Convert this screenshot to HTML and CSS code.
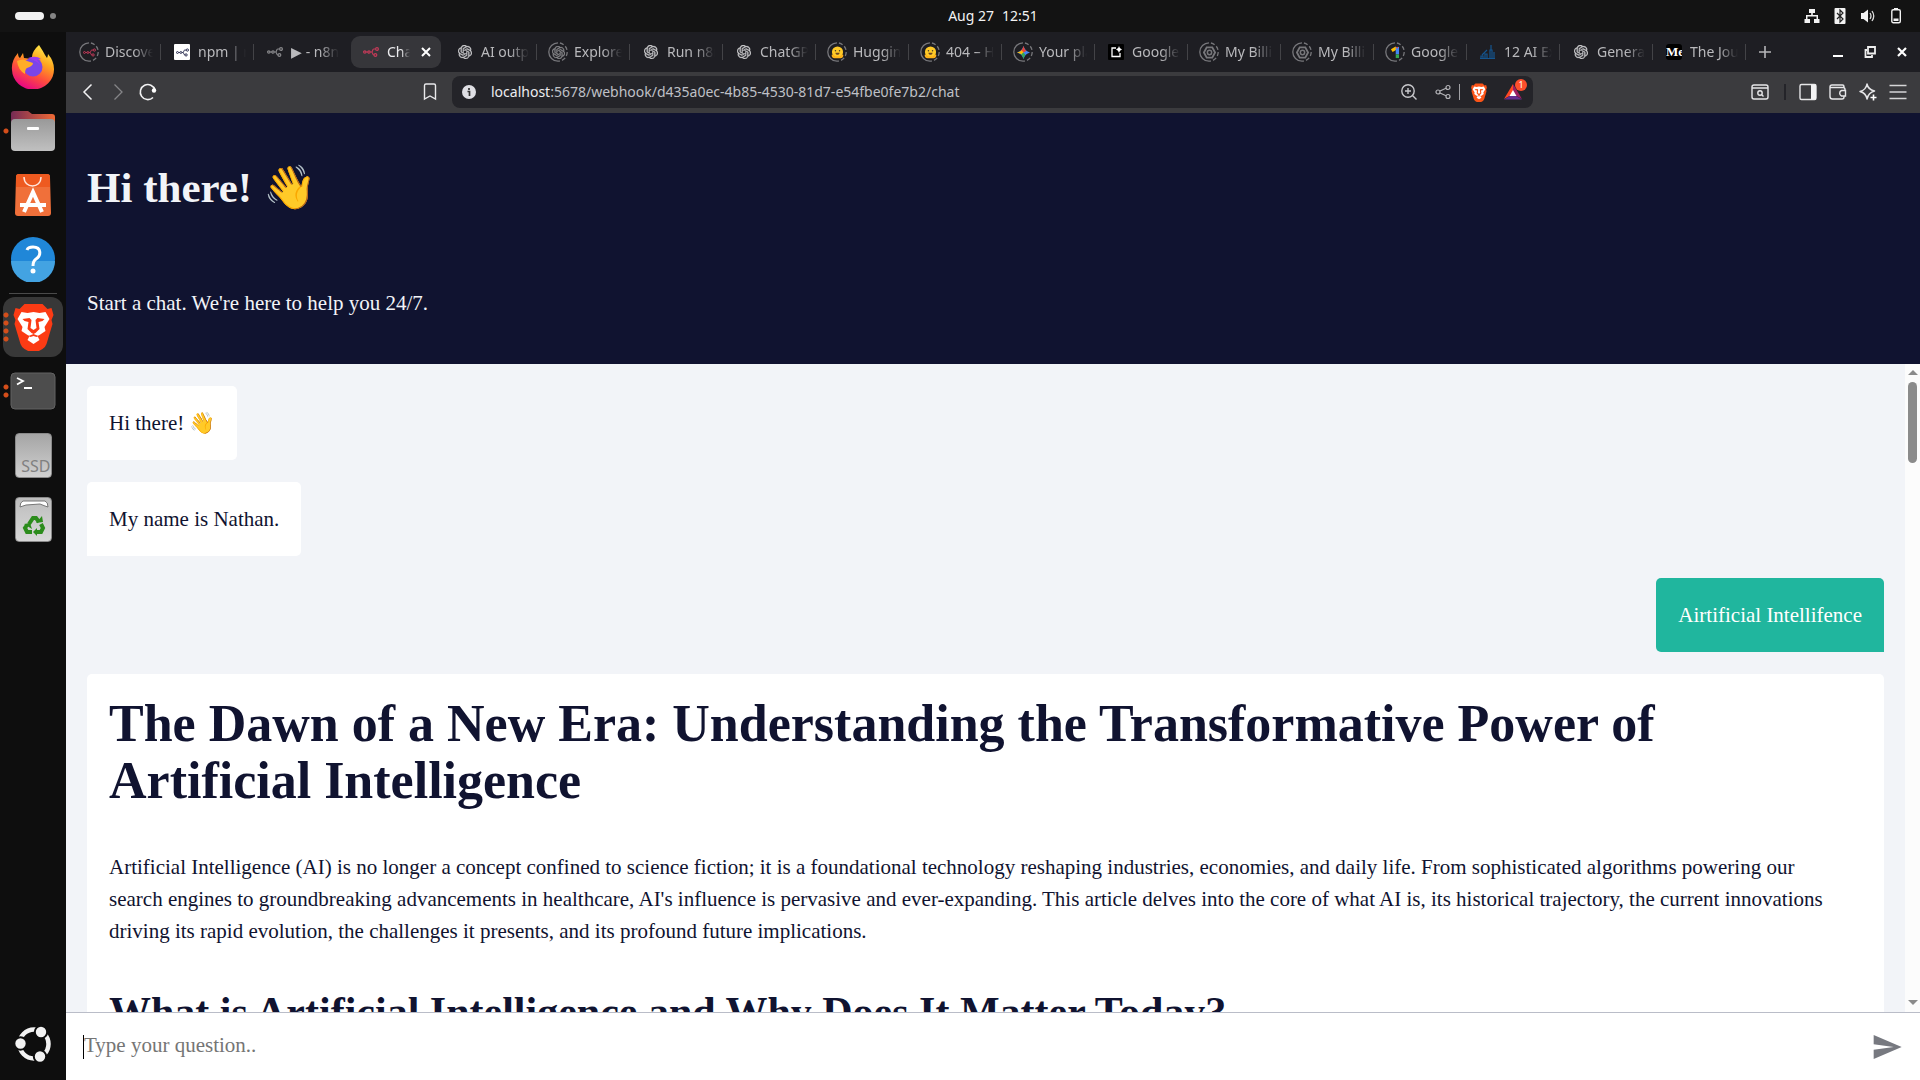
FILE: index.html
```html
<!DOCTYPE html>
<html lang="en">
<head>
<meta charset="utf-8">
<title>Chat</title>
<link rel="stylesheet" href="styles.css">
</head>
<body>
<svg class="defs" width="0" height="0" aria-hidden="true">
  <defs>
    <symbol id="n8n" viewBox="0 0 16 16">
      <g fill="none" stroke="currentColor" stroke-width="1.2">
        <circle cx="1.8" cy="8" r="1.2"/><circle cx="6" cy="8" r="1.2"/>
        <circle cx="14" cy="5" r="1.4"/><circle cx="12.4" cy="11" r="1.4"/>
        <path d="M3 8h1.800M7.200 8h1.300c1.500 0 .6-3 2.300-3h1.800M8.500 8c1.500 0 .6 3 2.500 3"/>
      </g>
    </symbol>
    <symbol id="openai" viewBox="0 0 24 24">
      <path fill="currentColor" stroke="currentColor" stroke-width=".6" d="M22.2819 9.8211a5.9847 5.9847 0 0 0-.5157-4.9108 6.0462 6.0462 0 0 0-6.5098-2.9A6.0651 6.0651 0 0 0 4.9807 4.1818a5.9847 5.9847 0 0 0-3.9977 2.9 6.0462 6.0462 0 0 0 .7427 7.0966 5.98 5.98 0 0 0 .511 4.9107 6.051 6.051 0 0 0 6.5146 2.9001A5.9847 5.9847 0 0 0 13.2599 24a6.0557 6.0557 0 0 0 5.7718-4.2058 5.9894 5.9894 0 0 0 3.9977-2.9001 6.0557 6.0557 0 0 0-.7475-7.0729zm-9.022 12.6081a4.4755 4.4755 0 0 1-2.8764-1.0408l.1419-.0804 4.7783-2.7582a.7948.7948 0 0 0 .3927-.6813v-6.7369l2.02 1.1686a.071.071 0 0 1 .038.052v5.5826a4.504 4.504 0 0 1-4.4945 4.4944zm-9.6607-4.1254a4.4708 4.4708 0 0 1-.5346-3.0137l.142.0852 4.783 2.7582a.7712.7712 0 0 0 .7806 0l5.8428-3.3685v2.3324a.0804.0804 0 0 1-.0332.0615L9.74 19.9502a4.4992 4.4992 0 0 1-6.1408-1.6464zM2.3408 7.8956a4.485 4.485 0 0 1 2.3655-1.9728V11.6a.7664.7664 0 0 0 .3879.6765l5.8144 3.3543-2.0201 1.1685a.0757.0757 0 0 1-.071 0l-4.8303-2.7865A4.504 4.504 0 0 1 2.3408 7.872zm16.5963 3.8558L13.1038 8.364 15.1192 7.2a.0757.0757 0 0 1 .071 0l4.8303 2.7913a4.4944 4.4944 0 0 1-.6765 8.1042v-5.6772a.79.79 0 0 0-.407-.667zm2.0107-3.0231l-.142-.0852-4.7735-2.7818a.7759.7759 0 0 0-.7854 0L9.409 9.2297V6.8974a.0662.0662 0 0 1 .0284-.0615l4.8303-2.7866a4.4992 4.4992 0 0 1 6.6802 4.66zM8.3065 12.863l-2.02-1.1638a.0804.0804 0 0 1-.038-.0567V6.0742a4.4992 4.4992 0 0 1 7.3757-3.4537l-.142.0805L8.704 5.459a.7948.7948 0 0 0-.3927.6813zm1.0976-2.3654l2.602-1.4998 2.6069 1.4998v2.9994l-2.5974 1.4997-2.6067-1.4997Z"/>
    </symbol>
    <symbol id="ring" viewBox="0 0 20 20">
      <path d="M10 .8a9.200 9.200 0 0 0 0 18.400" fill="none" stroke="#77777b" stroke-width="1.3"/>
      <path d="M10 .8a9.200 9.200 0 0 1 0 18.400" fill="none" stroke="#77777b" stroke-width="1.3" stroke-dasharray="4 2.200" stroke-dashoffset="-2"/>
    </symbol>
    <symbol id="hugging" viewBox="0 0 14 14">
      <circle cx="7" cy="6.500" r="6" fill="#ffca28"/>
      <path d="M.8 9.500c1.400-1 2.700.3 3 1.500h6.400c.3-1.200 1.600-2.500 3-1.500.6 2-1.200 3.700-3 3.700H3.800C2 13.200.2 11.500.8 9.500z" fill="#ffb31a"/>
      <circle cx="4.800" cy="5" r=".8" fill="#453c27"/><circle cx="9.200" cy="5" r=".8" fill="#453c27"/>
      <path d="M4.800 7.200h4.400c0 3-4.400 3-4.400 0z" fill="#6b4622"/>
    </symbol>
    <symbol id="billing" viewBox="0 0 14 14">
      <g fill="none" stroke="#77777b"><path stroke-width="2" d="M4 1.500h6L13 7l-3 5.500H4L1 7z"/><circle cx="7" cy="7" r="2.300" stroke-width="1.600"/></g>
    </symbol>
    <symbol id="lion" viewBox="0 0 40 48">
      <path fill="currentColor" d="M11 1h18l5 5 4-1 2 7-2 5 1 4-6 20q-1 3-4 5l-9 5-9-5q-3-2-4-5L1 21l1-4-2-5 2-7 4 1z"/>
      <path fill="#fff" d="M8 9l6 1 6-1 6 1 6-1 4 7-5 8 1 4-6 4-2 1 2 4-6 4-6-4 2-4-2-1-6-4 1-4-5-8z"/>
      <path fill="currentColor" d="M9 16l7-1 2 2-1 8 3 2 3-2-1-8 2-2 7 1-2 2-4 1 1 7-4 4-2 1-2-1-4-4 1-7-4-1zM15 33l5-2 5 2-2 1-3-1-3 1z"/>
    </symbol>
  </defs>
</svg>

<div class="desktop">
  <header class="topbar">
    <div class="workspaces"><i class="pill"></i><i class="dot"></i></div>
    <time class="clock"><span>Aug 27</span><span>12:51</span></time>
    <div class="status">
      <svg width="16" height="16" viewBox="0 0 16 16"><path fill="#f2f2f2" d="M5 1h6v4H8.800v2H14v4h1.500v4H10v-4h2.500V8.500h-9V11H6v4H.5v-4H2V7h5.200V5H5z"/></svg>
      <svg width="16" height="16" viewBox="0 0 16 16"><rect x="2.500" width="11" height="16" rx="1" fill="#f2f2f2"/><path d="M5 5l6 6-3 3V2l3 3-6 6" fill="none" stroke="#222" stroke-width="1.200"/></svg>
      <svg width="16" height="16" viewBox="0 0 16 16"><path fill="#f2f2f2" d="M1 5h2.500L8 1.500v13L3.500 11H1z"/><path d="M10 5q2 3 0 6M12 3q3.500 5 0 10" fill="none" stroke="#ddd" stroke-width="1.300"/></svg>
      <svg width="16" height="16" viewBox="0 0 16 16"><rect x="3.800" y="1.800" width="8.500" height="13" rx="1.500" fill="none" stroke="#f2f2f2" stroke-width="1.400"/><path fill="#f2f2f2" d="M6 0h4v2H6zM5.500 10.500h5V13h-5z"/></svg>
    </div>
  </header>

  <nav class="dock" aria-label="Dock">
    <a href="#" class="app" aria-label="Firefox"><svg width="44" height="44" viewBox="0 0 44 44">
      <defs><linearGradient id="ff" x1=".8" y1="0" x2=".3" y2="1"><stop offset="0" stop-color="#fff44f"/><stop offset=".35" stop-color="#ffa51e"/><stop offset=".65" stop-color="#ff4f3c"/><stop offset="1" stop-color="#e5008a"/></linearGradient></defs>
      <path fill="url(#ff)" d="M28 0q4 6 6 10l2 3q1-2 1-4 6 7 6 15a21 20 0 0 1-42 1Q0 16 7 8q0 4 2 5l3-5 1 5 8 1q-1-7 7-14z"/>
      <circle cx="22" cy="22" r="9.500" fill="#7b45e8"/>
      <path fill="#ffac28" d="M6 16q6-3 10 0l6 2q0 3-6 5-2 1-2 6-7-4-8-13z"/>
      <path fill="#9c3cf0" d="M17 13q8-3 13 1l-4 1 5 7q-4-6-14-9z"/>
    </svg></a>
    <a href="#" class="app" aria-label="Files"><i class="runs one"></i><svg width="46" height="42" viewBox="0 0 46 42">
      <defs><linearGradient id="fo"><stop offset="0" stop-color="#752b55"/><stop offset="1" stop-color="#f06a35"/></linearGradient><linearGradient id="fg" x2="0" y2="1"><stop offset="0" stop-color="#999"/><stop offset="1" stop-color="#c0c0c0"/></linearGradient></defs>
      <path fill="url(#fo)" d="M1 4q0-3 3-3h14l4 3h20q3 0 3 3v12H1z"/><rect x="1" y="9" width="44" height="32" rx="4" fill="url(#fg)"/><rect x="17" y="17" width="12" height="3" rx="1" fill="#fff"/></svg></a>
    <a href="#" class="app" aria-label="App Center"><svg width="38" height="42" viewBox="0 0 38 42">
      <path fill="#f0703a" d="M5 0h28q3 0 3 3l1 36q0 3-3 3H4q-3 0-3-3L2 3q0-3 3-3z"/><path fill="#ee5a20" d="M5 0h28q3 0 3 3v10H2V3q0-3 3-3z"/>
      <path d="M10 3c0 12 17 12 17 0" fill="none" stroke="#ffe6dc" stroke-width="1.500"/><path d="M10 38l9-20 9 20M6 31h26" fill="none" stroke="#fff" stroke-width="4"/></svg></a>
    <a href="#" class="app" aria-label="Help"><svg width="46" height="46" viewBox="0 0 46 46"><circle cx="23" cy="23" r="22" fill="#2087d8"/><path fill="#43a3e2" d="M1 25h44a22 22 0 0 1-44 0z"/><path d="M17 14q1-3 6-3c9 0 8 9 3 12q-3 2-3 7" fill="none" stroke="#fff" stroke-width="3"/><circle cx="23" cy="35" r="2.500" fill="#fff"/></svg></a>
    <hr class="dock-line">
    <a href="#" class="app" aria-label="Brave"><span class="tile"><svg width="41" height="48" class="brave"><use href="#lion"/></svg></span><i class="runs four"></i></a>
    <a href="#" class="app" aria-label="Terminal"><i class="runs two"></i><svg width="46" height="38" viewBox="0 0 46 38"><rect x="1" y="1" width="44" height="36" rx="4" fill="#4d4d4d" stroke="#626262"/><path d="M7 6l6 3-6 3.500M14 16h8" fill="none" stroke="#fff" stroke-width="1.800"/></svg></a>
    <a href="#" class="app" aria-label="SSD drive"><span class="drive">SSD</span></a>
    <a href="#" class="app" aria-label="Trash"><span class="trash"><svg width="36" height="44" viewBox="0 0 36 44"><path fill="#fff" stroke="#777" d="M4 9q0-5 3-6h22q3 1 3 6l-3-1-5-2-14 1z"/>
      <g fill="none" stroke="#2c8c1c" stroke-width="4"><path d="M13 26l4-6h3l3 4"/><path d="M25 26l2 4-2 4h-5"/><path d="M16 34h-5l-2-4 2-3"/></g>
      <path fill="#2c8c1c" d="M20 25l7-1-1-6zM21 30v8l-4-4zM8 26l6-1 2 6z"/></svg></span></a>
    <a href="#" class="app launcher" aria-label="Show applications"><svg width="38" height="38" viewBox="0 0 38 38"><circle cx="20" cy="19" r="14.500" fill="none" stroke="#f2f2f2" stroke-width="4.500"/><g fill="#f2f2f2" stroke="#0e0e0e" stroke-width="2"><circle cx="6.500" cy="18.500" r="6.200"/><circle cx="27" cy="7" r="6.200"/><circle cx="26" cy="31.500" r="6.200"/></g></svg></a>
  </nav>

  <div class="browser">
    <div class="tabstrip">
      <div class="tabs">
        <a href="#" class="tab"><span class="fav"><svg class="ring"><use href="#ring"/></svg><svg class="small red"><use href="#n8n"/></svg></span><span class="label">Discover</span></a>
        <a href="#" class="tab"><span class="fav white"><svg class="small ink"><use href="#n8n"/></svg></span><span class="label">npm | n8n</span></a>
        <a href="#" class="tab plain"><span class="fav"><svg class="mid gray"><use href="#n8n"/></svg></span><span class="label">▶ - n8n</span></a>
        <div class="tab active"><span class="fav"><svg class="mid red"><use href="#n8n"/></svg></span><span class="label">Chat</span><button class="close" aria-label="Close tab"><svg width="10" height="10" viewBox="0 0 10 10"><path d="M1 1l8 8M9 1L1 9" stroke="#fff" stroke-width="2"/></svg></button></div>
        <a href="#" class="tab"><span class="fav"><svg class="mark"><use href="#openai"/></svg></span><span class="label">AI output</span></a>
        <a href="#" class="tab"><span class="fav"><svg class="ring"><use href="#ring"/></svg><svg class="small gray"><use href="#openai"/></svg></span><span class="label">Explore</span></a>
        <a href="#" class="tab"><span class="fav"><svg class="mark"><use href="#openai"/></svg></span><span class="label">Run n8n</span></a>
        <a href="#" class="tab"><span class="fav"><svg class="mark"><use href="#openai"/></svg></span><span class="label">ChatGPT</span></a>
        <a href="#" class="tab"><span class="fav"><svg class="ring"><use href="#ring"/></svg><svg class="small"><use href="#hugging"/></svg></span><span class="label">Hugging</span></a>
        <a href="#" class="tab"><span class="fav"><svg class="ring"><use href="#ring"/></svg><svg class="small"><use href="#hugging"/></svg></span><span class="label">404 – Hu</span></a>
        <a href="#" class="tab"><span class="fav"><svg class="ring"><use href="#ring"/></svg><svg class="small" viewBox="0 0 14 14"><path fill="#4285f4" d="M7 0q1.500 5.500 7 7-5.500 1.500-7 7-1.500-5.500-7-7 5.500-1.500 7-7z"/><path fill="#ea4335" d="M7 0q1 4 3 5.500L7 7 4 5.500Q6 4 7 0z"/><path fill="#fbbc04" d="M0 7q4-1 5-2.500L7 7l-2 2.500Q4 8 0 7z"/><path fill="#34a853" d="M7 14Q6 10 4.500 9L7 7l2 2.500Q7.500 11 7 14z"/></svg></span><span class="label">Your plan</span></a>
        <a href="#" class="tab"><span class="fav black"><svg class="mid" viewBox="0 0 16 16"><path d="M8 4H4v8.500h8V9" fill="none" stroke="#fff" stroke-width="1.300"/><path fill="#fff" d="M11 2q.5 3 3 3.500Q11.500 6 11 9q-.5-3-3-3.500Q10.500 5 11 2z"/></svg></span><span class="label">Google</span></a>
        <a href="#" class="tab"><span class="fav"><svg class="ring"><use href="#ring"/></svg><svg class="small"><use href="#billing"/></svg></span><span class="label">My Billing</span></a>
        <a href="#" class="tab"><span class="fav"><svg class="ring"><use href="#ring"/></svg><svg class="small"><use href="#billing"/></svg></span><span class="label">My Billing</span></a>
        <a href="#" class="tab"><span class="fav"><svg class="ring"><use href="#ring"/></svg><svg class="small" viewBox="0 0 14 14"><path d="M3 5l5-3" stroke="#fbbc04" stroke-width="3.500"/><path d="M9 1v8" stroke="#4285f4" stroke-width="3.500"/><path d="M9 9v4" stroke="#34a853" stroke-width="3.500"/><path d="M7.300 1H10l-1 2z" fill="#ea4335"/></svg></span><span class="label">Google</span></a>
        <a href="#" class="tab"><span class="fav"><svg class="mid" viewBox="0 0 16 16"><path d="M1 14v-2h2v2M5 14v-4h2v4M10 14V6h2v8M11 6V1M14 14V8M0 14.500h15M2 11l5-5" fill="none" stroke="#14558f" stroke-width="1.200"/></svg></span><span class="label">12 AI Ex</span></a>
        <a href="#" class="tab"><span class="fav"><svg class="mark"><use href="#openai"/></svg></span><span class="label">General</span></a>
        <a href="#" class="tab"><span class="fav black medium">Me</span><span class="label">The Jour</span></a>
      </div>
      <div class="window-controls">
        <button class="add" aria-label="New tab"><svg width="12" height="12" viewBox="0 0 12 12"><path d="M6 0v12M0 6h12" stroke="#b5b5b8" stroke-width="1.600"/></svg></button>
        <div class="win">
          <button aria-label="Minimize"><svg width="12" height="12" viewBox="0 0 12 12"><path d="M1 10h10" stroke="#fff" stroke-width="2"/></svg></button>
          <button aria-label="Restore"><svg width="12" height="12" viewBox="0 0 12 12"><path d="M4 1h7v6.500H4zM3 4H1.500v7H8V9" fill="none" stroke="#eee" stroke-width="1.800"/></svg></button>
          <button aria-label="Close"><svg width="12" height="12" viewBox="0 0 12 12"><path d="M2 2l8 8M10 2l-8 8" stroke="#fff" stroke-width="2.200"/></svg></button>
        </div>
      </div>
    </div>

    <div class="toolbar">
      <div class="nav-buttons">
        <button aria-label="Back"><svg width="20" height="20" viewBox="0 0 20 20"><path d="M13.500 2.500L6 10l7.500 7.500" fill="none" stroke="#f2f2f3" stroke-width="1.500"/></svg></button>
        <button aria-label="Forward"><svg width="20" height="20" viewBox="0 0 20 20"><path d="M6.500 2.500L14 10l-7.500 7.500" fill="none" stroke="#858588" stroke-width="1.300"/></svg></button>
        <button aria-label="Reload"><svg width="20" height="20" viewBox="0 0 20 20"><path d="M15 15.500A7.500 7.500 0 1 1 17 8" fill="none" stroke="#f2f2f3" stroke-width="1.600"/><circle cx="16" cy="8.500" r="2.200" fill="#fff"/></svg></button>
      </div>
      <button class="bookmark" aria-label="Bookmark"><svg width="20" height="20" viewBox="0 0 20 20"><path d="M4.500 3.500q0-1.500 1.500-1.500h8q1.500 0 1.500 1.500V17L10 14l-5.500 3z" fill="none" stroke="#e8e8ea" stroke-width="1.400"/></svg></button>
      <div class="address">
        <svg width="14" height="14" viewBox="0 0 14 14"><circle cx="7" cy="7" r="7" fill="#dfdfe4"/><path d="M5.500 6.500H7.500V11M7 3v2" fill="none" stroke="#333" stroke-width="1.700"/></svg>
        <div class="url"><b>localhost</b>:5678/webhook/d435a0ec-4b85-4530-81d7-e54fbe0fe7b2/chat</div>
        <button aria-label="Zoom"><svg width="18" height="18" viewBox="0 0 18 18"><path d="M8 1.800a6 6 0 1 0 0 12.400A6 6 0 0 0 8 1.800zM12.500 12.500l4 4M8 5v6M5 8h6" fill="none" stroke="#c8c8cc" stroke-width="1.400"/></svg></button>
        <button class="share" aria-label="Share"><svg width="16" height="16" viewBox="0 0 16 16"><g fill="none" stroke="#b5b5b9" stroke-width="1.200"><circle cx="3" cy="8" r="2"/><circle cx="13" cy="3.500" r="2"/><circle cx="13" cy="12.500" r="2"/><path d="M5 7l6-2.700M5 9l6 2.700"/></g></svg></button>
        <i class="divider"></i>
        <button aria-label="Brave Shields"><svg width="16" height="19" class="shield"><use href="#lion"/></svg></button>
        <button class="rewards" aria-label="Rewards"><svg width="18" height="16" viewBox="0 0 18 16"><path fill="#ff4724" d="M9 0L0 15l9-5z"/><path fill="#9e1f63" d="M9 0l9 15-9-5z"/><path fill="#662d91" d="M0 15.500h18L9 10z"/><path fill="#fff" d="M9 6l3.500 6h-7z"/></svg><span class="badge">1</span></button>
      </div>
      <div class="tools">
        <button aria-label="Search tabs"><svg width="20" height="20" viewBox="0 0 20 20"><g fill="none" stroke="#e6e6e8" stroke-width="1.400"><rect x="2" y="3" width="16" height="14" rx="2"/><path d="M2 6h16M11.500 12.500l2 2"/><circle cx="10" cy="11" r="2.200"/></g></svg></button>
        <i class="divider dark"></i>
        <button aria-label="Sidebar"><svg width="20" height="20" viewBox="0 0 20 20"><rect x="2" y="2.500" width="16" height="15" rx="1.500" fill="none" stroke="#e6e6e8" stroke-width="1.400"/><path fill="#f2f2f3" d="M13 2.500h5v15h-5z"/></svg></button>
        <button aria-label="Wallet"><svg width="20" height="20" viewBox="0 0 20 20"><path d="M16 6V4.500Q16 3 14.500 3H4Q2 3 2 5v9.500Q2 17 4.500 17H14q2 0 2-2v-.500M2 5.500h13q2 0 2 2V8M17.500 8.500h-4a3 3 0 0 0 0 5.500h4z" fill="none" stroke="#e6e6e8" stroke-width="1.400"/></svg></button>
        <button aria-label="Leo AI"><svg width="20" height="20" viewBox="0 0 20 20"><path d="M9 2q1 5.500 7.500 7-6 1.500-7.500 8Q8 11 2 9.500 8 8 9 2z" fill="none" stroke="#e6e6e8" stroke-width="1.500" stroke-linejoin="round"/><path d="M15.500 12.500v6M12.500 15.500h6" stroke="#fff" stroke-width="1.600"/></svg></button>
        <button aria-label="Menu"><svg width="20" height="20" viewBox="0 0 20 20"><path d="M1.500 3.500h17M1.500 10h17M1.500 16.500h17" stroke="#d5d5d7" stroke-width="1.600"/></svg></button>
      </div>
    </div>

    <main class="chat">
      <header class="chat-header">
        <h1>Hi there! 👋</h1>
        <p>Start a chat. We're here to help you 24/7.</p>
      </header>
      <div class="chat-body">
        <div class="messages">
          <div class="message bot">Hi there! 👋</div>
          <div class="message bot">My name is Nathan.</div>
          <div class="message user">Airtificial Intellifence</div>
          <article class="message bot article">
            <h1>The Dawn of a New Era: Understanding the Transformative Power of Artificial Intelligence</h1>
            <p>Artificial Intelligence (AI) is no longer a concept confined to science fiction; it is a foundational technology reshaping industries, economies, and daily life. From sophisticated algorithms powering our search engines to groundbreaking advancements in healthcare, AI's influence is pervasive and ever-expanding. This article delves into the core of what AI is, its historical trajectory, the current innovations driving its rapid evolution, the challenges it presents, and its profound future implications.</p>
            <h2>What is Artificial Intelligence and Why Does It Matter Today?</h2>
          </article>
        </div>
        <div class="scrollbar"><i class="arrow up"></i><i class="thumb"></i><i class="arrow down"></i></div>
      </div>
      <form class="composer">
        <i class="caret"></i>
        <input type="text" placeholder="Type your question.." aria-label="Type your question">
        <button type="button" aria-label="Send"><svg width="32" height="32" viewBox="0 0 24 24"><path fill="#777980" d="M2.010 21L23 12 2.010 3 2 10l15 2-15 2z"/></svg></button>
      </form>
    </main>
  </div>
</div>
</body>
</html>
```
FILE: styles.css
```css
* { box-sizing: border-box; }

body {
  margin: 0;
  font-family: "Liberation Serif", "Times New Roman", serif;
  background: #0e0e0e;
}

button {
  display: flex;
  align-items: center;
  justify-content: center;
  padding: 0;
  border: 0;
  background: none;
}

a { color: inherit; text-decoration: none; }
svg { display: block; flex: none; }
.defs { position: absolute; }

.desktop {
  display: grid;
  grid-template: 32px minmax(0, 1fr) / 66px minmax(0, 1fr);
  height: 100vh;
}

/* System bar */
.topbar {
  grid-column: 1 / -1;
  display: grid;
  grid-template-columns: 66px 1fr;
  align-items: center;
  background: #131313;
  color: #f2f2f2;
  font: 14px/30px "Noto Sans", sans-serif;
}
.workspaces { display: flex; align-items: center; gap: 6px; padding-left: 15px; }
.pill { width: 29px; height: 8px; border-radius: 4px; background: #f2f2f2; }
.dot { width: 6px; height: 6px; border-radius: 3px; background: #858585; }
.clock { display: flex; justify-content: center; gap: 8px; grid-area: 1 / 2; }
.status {
  grid-area: 1 / 2;
  justify-self: end;
  display: flex;
  gap: 12px;
  padding-right: 16px;
}

/* Dock */
.dock { display: flex; flex-direction: column; padding-top: 3px; background: #0e0e0e; }
.app {
  position: relative;
  display: flex;
  flex: none;
  align-items: center;
  justify-content: center;
  height: 64px;
}
.dock-line { width: 48px; height: 1px; margin: 2px auto 1px; border: 0; background: #4a4a4a; }
.tile {
  display: flex;
  align-items: center;
  justify-content: center;
  width: 60px;
  height: 60px;
  border-radius: 12px;
  background: #383838;
}
.brave { color: #fb3b14; }
.runs {
  position: absolute;
  left: 3px;
  top: 50%;
  width: 6px;
  translate: 0 -50%;
  background: radial-gradient(circle, #d54e1a 2px, transparent 3px) 0 0 / 6px 8px;
}
.runs.one { height: 8px; }
.runs.two { height: 16px; }
.runs.four { height: 32px; }
.drive, .trash {
  width: 37px;
  height: 45px;
  border: 1px solid #8a8a8a;
  border-radius: 4px;
  background: linear-gradient(#a5a5a5, #d0d0d0);
}
.drive {
  display: flex;
  align-items: flex-end;
  justify-content: flex-end;
  color: #808080;
  font: 16px/22px "Noto Sans", sans-serif;
}
.trash { background: linear-gradient(#bdbdbd, #d8d8d8); }
.launcher { height: 72px; margin-top: auto; }

/* Browser chrome */
.browser {
  display: flex;
  flex-direction: column;
  min-width: 0;
  min-height: 0;
  font-size: 21px;
}
.tabstrip { display: flex; flex: none; height: 40px; padding-left: 2px; background: #1e1e23; }
.tabs {
  flex: 1;
  min-width: 0;
  display: grid;
  grid-template-columns: repeat(3, minmax(0, 1fr)) 97px repeat(14, minmax(0, 1fr));
}
.tab {
  position: relative;
  display: flex;
  align-items: center;
  gap: 6px;
  padding: 0 8px 0 11px;
  color: #b9b9bc;
  font: 14px/20px "Noto Sans", sans-serif;
}
.tab:not(.active, .plain)::after {
  content: "";
  position: absolute;
  right: 0;
  width: 1px;
  height: 16px;
  background: #434347;
}
.label {
  flex: 1;
  min-width: 0;
  overflow: hidden;
  white-space: nowrap;
  mask-image: linear-gradient(90deg, #000 60%, transparent);
}
.fav { display: grid; place-items: center; flex: none; width: 20px; height: 20px; }
.fav svg { grid-area: 1 / 1; }
.fav.white, .fav.black { width: 16px; height: 16px; margin: 0 2px; border-radius: 1px; }
.fav.white { background: #fff; }
.fav.black { background: #000; }
.fav.medium { overflow: hidden; border-radius: 3px; color: #fff; font: bold 13px/16px "Liberation Serif", serif; }
.ring { width: 20px; height: 20px; }
.small { width: 13px; height: 13px; }
.mid { width: 16px; height: 16px; }
.mark { width: 14px; height: 14px; color: #c9c9cb; }
.red { color: #c33a58; }
.ink { color: #2c2f52; }
.gray { color: #88888b; }
.active {
  margin: 4px 3px 4px 4px;
  padding: 0 10px 0 10px;
  border-radius: 9px;
  background: #36363a;
  color: #ececee;
}
.active .label { margin-right: 5px; }
.window-controls {
  display: flex;
  flex: none;
  align-items: center;
  justify-content: space-between;
  width: 174px;
  padding: 0 12px 0 13px;
}
.win { display: flex; gap: 20px; }

.toolbar {
  display: flex;
  flex: none;
  align-items: center;
  height: 41px;
  padding: 0 12px 1px;
  background: #3b3b3e;
}
.nav-buttons { display: flex; gap: 10px; }
.bookmark { margin: 0 12px 0 auto; }
.address {
  display: flex;
  flex: 0 1 1081px;
  align-items: center;
  height: 32px;
  margin-right: 217px;
  padding: 0 10px;
  border-radius: 8px;
  background: #242429;
}
.address .url {
  flex: 1;
  padding-left: 15px;
  color: #bfc0c6;
  font: 14px/20px "Noto Sans", sans-serif;
}
.url b { color: #ececf0; font-weight: 400; }
.share { margin: 0 8px 0 17px; }
.divider { width: 1px; height: 16px; margin-right: 11px; background: #a0a0a4; }
.rewards { position: relative; margin-left: 17px; margin-right: 1px; }
.badge {
  position: absolute;
  left: 11px;
  top: -5px;
  width: 12px;
  height: 12px;
  border-radius: 6px;
  background: #ff4f2c;
  color: #fff;
  font: 9px/12px "Noto Sans", sans-serif;
}
.shield { color: #fb5418; }
.tools { display: flex; flex: none; align-items: center; gap: 10px; }
.divider.dark { width: 2px; margin: 0 2px 0 4px; background: #242429; }

/* Chat page */
.chat { display: flex; flex: 1; flex-direction: column; min-height: 0; background: #f2f4f8; }
.chat-header { flex: none; padding: 21px; background: #101330; color: #f2f4f8; }
.chat-header h1 { margin: 29px 0 72px; font-size: 43px; line-height: 49px; }
.chat-header p { margin: 0 0 21px; line-height: 38px; }
.chat-body { display: flex; flex: 1; min-height: 0; }
.messages {
  display: flex;
  flex: 1;
  flex-direction: column;
  gap: 22px;
  overflow: hidden;
  padding: 22px 21px 0;
  color: #101330;
}
.message { flex: none; padding: 21px 22px; line-height: 32px; }
.bot { align-self: flex-start; border-radius: 5px 5px 5px 0; background: #fff; }
.user { align-self: flex-end; border-radius: 5px 5px 0 5px; background: #20b69e; color: #fff; }
.article h1 { margin: 0 0 42px; font-size: 52px; line-height: 57px; }
.article p { margin: 0 0 42px; padding-right: 16px; }
.article h2 { margin: 0; font-size: 42px; line-height: 46px; }

.scrollbar {
  display: flex;
  flex: none;
  flex-direction: column;
  align-items: center;
  width: 15px;
  padding: 6px 0 7px;
  background: #fcfcfc;
}
.arrow { border: 0 solid transparent; border-width: 0 5px; }
.arrow.up { border-bottom: 5px solid #8b8b8b; }
.arrow.down { margin-top: auto; border-top: 5px solid #8b8b8b; }
.thumb { width: 9px; height: 81px; margin-top: 7px; border-radius: 5px; background: #8b8b8b; }

.composer {
  display: flex;
  flex: none;
  align-items: center;
  height: 68px;
  padding: 0 17px;
  border-top: 1px solid #babdc8;
  background: #fff;
}
.caret { width: 1px; height: 24px; background: #000; }
.composer input {
  flex: 1;
  padding: 0 0 4px;
  border: 0;
  outline: 0;
  background: none;
  color: #101330;
  font: 21px/32px "Liberation Serif", serif;
}
.composer input::placeholder { color: #757575; }
```
